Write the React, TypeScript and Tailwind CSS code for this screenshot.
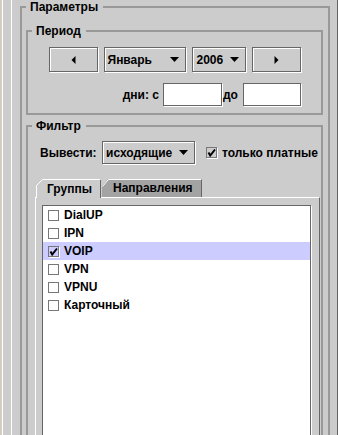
const raised = "border border-[#666] shadow-[inset_1px_1px_0_#fff,1px_1px_0_#fff]";

const Tri = ({ dir }: { dir: "left" | "right" | "down" }) => {
  if (dir === "down")
    return (
      <svg width="9" height="5" viewBox="0 0 9 5">
        <polygon points="0,0 9,0 4.5,5" fill="#000" />
      </svg>
    );
  return (
    <svg width="5" height="8" viewBox="0 0 5 8">
      <polygon points={dir === "left" ? "4.5,0 4.5,8 0.5,4" : "0.5,0 0.5,8 4.5,4"} fill="#000" />
    </svg>
  );
};

const Check = ({ checked }: { checked?: boolean }) => (
  <div className="w-[11px] h-[11px] shrink-0 border border-[#777] shadow-[1px_1px_0_#fff] flex items-center justify-center">
    {checked && (
      <svg width="9" height="9" viewBox="0 0 9 9">
        <polyline points="1.5,4.5 3.2,7.5 8,1.5" fill="none" stroke="#000" strokeWidth="2" />
      </svg>
    )}
  </div>
);

const Combo = ({ value, w, pl }: { value: string; w: string; pl: string }) => (
  <div className={`${raised} ${w} h-[25px] flex items-center justify-between ${pl} pr-[6px]`}>
    <span>{value}</span>
    <Tri dir="down" />
  </div>
);

const groups = ["DialUP", "IPN", "VOIP", "VPN", "VPNU", "Карточный"];

export default function App() {
  return (
    <div className="w-[338px] h-[435px] overflow-hidden bg-[#ccc] flex font-['Liberation_Sans',Arial,sans-serif] text-[12px] font-bold text-black leading-[14px]">
      <div className="w-px bg-[#ccc]" />
      <div className="w-px bg-[#d8d0bc]" />
      <div className="w-px bg-white" />
      <div className="w-[8px]" />
      <div className="flex-1 border-l border-white border-r border-r-[#666] pl-[8px] pr-[7px]">
        <fieldset className="border-2 border-[#999] h-[470px] min-w-0">
          <legend className="ml-[4px] pl-[4px] pr-[5px]">Параметры</legend>
          <div className="pl-[4px] pr-[5px] pt-[10px]">
            {/* Период */}
            <fieldset className="border-2 border-[#999] min-w-0">
              <legend className="ml-[4px] pl-[4px] pr-[5px]">Период</legend>
              <div className="pt-[9px] pb-[7px]">
                <div className="flex justify-center gap-[6px]">
                  <button className={`${raised} w-[49px] h-[25px] flex items-center justify-center`}>
                    <Tri dir="left" />
                  </button>
                  <Combo value="Январь" w="w-[82px]" pl="pl-[3px]" />
                  <Combo value="2006" w="w-[54px]" pl="pl-[4px]" />
                  <button className={`${raised} w-[49px] h-[25px] flex items-center justify-center`}>
                    <Tri dir="right" />
                  </button>
                </div>
                <div className="flex justify-end items-center pr-[20px] mt-[11px]">
                  <span className="mr-[4px]">дни: с</span>
                  <input readOnly className="w-[59px] h-[23px] bg-white border border-[#666] shadow-[1px_1px_0_#fff] outline-none" />
                  <span className="w-[21px] pl-[1px]">до</span>
                  <input readOnly className="w-[58px] h-[23px] bg-white border border-[#666] shadow-[1px_1px_0_#fff] outline-none" />
                </div>
              </div>
            </fieldset>

            {/* Фильтр */}
            <fieldset className="border-2 border-[#999] mt-[4px] min-w-0">
              <legend className="ml-[4px] pl-[4px] pr-[5px]">Фильтр</legend>
              <div className="pt-[8px] pl-[7px] pr-[1px]">
                <div className="flex items-center pl-[5px] h-[23px]">
                  <span className="w-[62px]">Вывести:</span>
                  <div className={`${raised} w-[93px] h-[23px] flex items-center justify-between pl-[3px] pr-[6px]`}>
                    <span>исходящие</span>
                    <Tri dir="down" />
                  </div>
                  <div className="ml-[11px]">
                    <Check checked />
                  </div>
                  <span className="ml-[5px]">только платные</span>
                </div>

                <div className="flex items-start h-[18px] ml-[1px] mt-[15px]">
                  <div className="relative z-10 w-[66px] h-[19px] flex items-center pl-[11px]">
                    <svg className="absolute inset-0" width="66" height="19" viewBox="0 0 66 19">
                      <polygon points="0,19 0,6 6,0 65,0 65,19" fill="#ccc" />
                      <polyline points="0.5,19 0.5,6.5 6.5,0.5 64,0.5" fill="none" stroke="#fff" />
                      <line x1="64.5" y1="1" x2="64.5" y2="19" stroke="#666" />
                    </svg>
                    <span className="relative">Группы</span>
                  </div>
                  <div className="relative w-[100px] h-[18px] flex items-center pl-[11px]">
                    <svg className="absolute inset-0" width="100" height="18" viewBox="0 0 100 18">
                      <polygon points="0,18 0,7 6,0 100,0 100,18" fill="#a3a3a3" />
                      <polyline points="0.5,7.5 6.5,0.5 99,0.5" fill="none" stroke="#fff" />
                      <line x1="99.5" y1="1" x2="99.5" y2="18" stroke="#666" />
                    </svg>
                    <span className="relative">Направления</span>
                  </div>
                </div>

                <div className="border-t border-l border-white border-r border-r-[#666] pl-[6px] pt-[7px] pr-[8px] h-[300px]">
                  <div className="border border-[#666] bg-white h-[280px] shadow-[1px_1px_0_#fff]">
                    {groups.map((g) => (
                      <div
                        key={g}
                        className={`h-[18px] flex items-center pl-[5px] ${g === "VOIP" ? "bg-[#ccccff]" : ""}`}
                      >
                        <Check checked={g === "VOIP"} />
                        <span className="ml-[5px]">{g}</span>
                      </div>
                    ))}
                  </div>
                </div>
              </div>
            </fieldset>
          </div>
        </fieldset>
      </div>
    </div>
  );
}
